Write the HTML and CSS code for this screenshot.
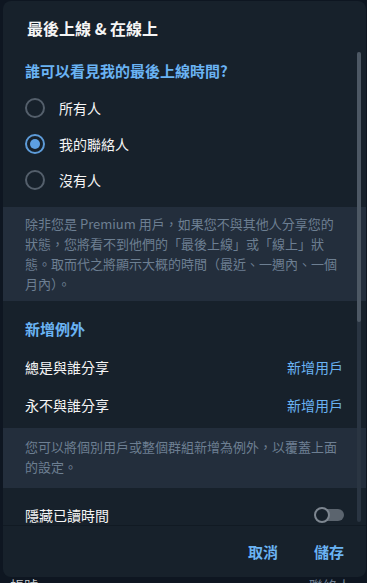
FILE: index.html
```html
<!doctype html>
<html lang="zh-Hant">
  <head>
    <meta charset="utf-8" />
    <title>最後上線 &amp; 在線上</title>
    <link rel="stylesheet" href="styles.css">
  </head>
  <body>
    <div class="dialog">
      <div class="dlg-title">最後上線 &amp; 在線上</div>
      <div class="dlg-body">
        <div class="section-head first">誰可以看見我的最後上線時間?</div>
        <div class="radio-row"><span class="radio"></span><span>所有人</span></div>
        <div class="radio-row"><span class="radio checked"></span><span>我的聯絡人</span></div>
        <div class="radio-row"><span class="radio"></span><span>沒有人</span></div>
        <div class="note note-a">除非您是 Premium 用戶，如果您不與其他人分享您的<br>狀態，您將看不到他們的「最後上線」或「線上」狀<br>態。取而代之將顯示大概的時間（最近、一週內、一個<br>月內）。</div>
        <div class="section-head">新增例外</div>
        <div class="link-row"><span>總是與誰分享</span><span class="link">新增用戶</span></div>
        <div class="link-row"><span>永不與誰分享</span><span class="link">新增用戶</span></div>
        <div class="note note-b">您可以將個別用戶或整個群組新增為例外，以覆蓋上面<br>的設定。</div>
        <div class="toggle-row"><span>隱藏已讀時間</span><span class="toggle"><span class="knob"></span></span></div>
        <div class="scrollbar"><div class="thumb"></div></div>
      </div>
      <div class="dlg-footer">
        <button class="btn">取消</button>
        <button class="btn">儲存</button>
      </div>
    </div>
    <div class="under"><span>帳號</span><span class="under-r">聯絡人</span></div>
  </body>
</html>
```

FILE: styles.css
```css
html, body {
  margin: 0;
  height: 100%;
  overflow: hidden;
}
body {
  background-color: #0e1621;
  color: #f5f5f5;
  font-family: "Noto Sans CJK TC", "Noto Sans", sans-serif;
}
.dialog {
  margin: 1px 1px 0 3px;
  height: 576px;
  background-color: #17212b;
  border-radius: 8px;
  display: flex;
  flex-direction: column;
  overflow: hidden;
}
.dlg-title {
  height: 46px;
  box-sizing: border-box;
  padding: 17px 24px 0;
  font-size: 16px;
  font-weight: bold;
  line-height: 20px;
}
.dlg-body {
  position: relative;
  height: 478px;
  overflow: hidden;
}
.section-head {
  padding: 18px 22px 0;
  line-height: 20px;
  font-size: 15px;
  font-weight: bold;
  color: #6ab3f3;
}
.section-head.first { padding-top: 14px; }
.radio-row {
  height: 36px;
  display: flex;
  align-items: center;
  padding-left: 22px;
  font-size: 14px;
}
.section-head.first + .radio-row { margin-top: 9px; }
.radio {
  width: 20px;
  height: 20px;
  box-sizing: border-box;
  border: 2px solid #545f6b;
  border-radius: 50%;
  margin-right: 14px;
  display: flex;
  align-items: center;
  justify-content: center;
}
.radio.checked { border-color: #5d9bd8; }
.radio.checked::after {
  content: "";
  width: 10px;
  height: 10px;
  border-radius: 50%;
  background-color: #5d9fe2;
}
.note {
  background-color: #232e3c;
  color: #6d7f92;
  font-size: 13px;
  line-height: 20px;
  padding: 7px 20px 7px 22px;
  white-space: nowrap;
}
.note-a { margin-top: 9px; }
.note-b { margin-top: 4px; padding: 9px 20px 11px 22px; }
.link-row {
  height: 38px;
  display: flex;
  align-items: center;
  justify-content: space-between;
  padding: 0 23px 0 22px;
  font-size: 14px;
}
.section-head + .link-row { margin-top: 9px; }
.link { color: #6ab3f3; }
.toggle-row {
  margin-top: 9px;
  height: 36px;
  display: flex;
  align-items: center;
  justify-content: space-between;
  padding: 0 22px 0 22px;
  font-size: 14px;
}
.toggle {
  position: relative;
  width: 30px;
  height: 16px;
  display: flex;
  align-items: center;
}
.toggle::before {
  content: "";
  margin-left: 4px;
  width: 26px;
  height: 12px;
  border-radius: 6px;
  background-color: #5b646e;
}
.knob {
  position: absolute;
  left: 0;
  top: 0;
  width: 16px;
  height: 16px;
  box-sizing: border-box;
  border: 2px solid #7d8690;
  border-radius: 50%;
  background-color: #17212b;
}
.scrollbar {
  position: absolute;
  right: 5px;
  top: 5px;
  width: 4px;
  height: 470px;
  border-radius: 2px;
  background-color: #2a3542;
}
.thumb {
  height: 270px;
  border-radius: 2px;
  background-color: #4d5864;
}
.dlg-footer {
  flex: 1;
  border-top: 1px solid #111a23;
  display: flex;
  justify-content: flex-end;
  align-items: center;
  gap: 36px;
  padding-right: 22px;
}
.btn {
  background: none;
  border: 0;
  padding: 0;
  font-family: inherit;
  font-size: 15px;
  font-weight: bold;
  color: #6ab3f3;
}
.under {
  display: flex;
  justify-content: space-between;
  padding: 0 16px 0 10px;
  margin-top: 1px;
  font-size: 14px;
  line-height: 14px;
  color: #c8ccd0;
}
.under-r { color: #6d7f92; }
```
